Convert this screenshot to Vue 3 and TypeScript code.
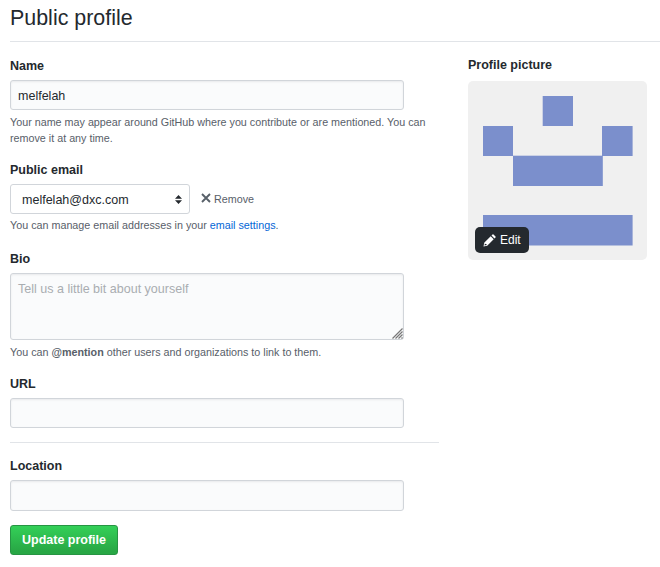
<script setup lang="ts">
import { ref } from 'vue'

interface Cell { x: number; y: number; w: number; h: number }

const name = ref('melfelah')
const email = ref('melfelah@dxc.com')
const bio = ref('')
const url = ref('')
const location = ref('')

const cells: Cell[] = [
  { x: 74.7, y: 15, w: 30.3, h: 30 },
  { x: 15, y: 45, w: 30, h: 30 },
  { x: 134, y: 45, w: 30.6, h: 30 },
  { x: 45, y: 74.7, w: 89.8, h: 30.3 },
  { x: 15, y: 134, w: 149.6, h: 30.5 },
]
</script>

<template>
  <main class="page">
    <h1 class="title">Public profile</h1>
    <div class="columns">
      <form class="form" @submit.prevent>
        <section class="field name-field">
          <label class="label" for="name">Name</label>
          <input id="name" v-model="name" class="control" type="text" />
          <p class="note">Your name may appear around GitHub where you contribute or are mentioned. You can<br />remove it at any time.</p>
        </section>

        <section class="field email-field">
          <label class="label" for="email">Public email</label>
          <div class="email-row">
            <button id="email" class="select" type="button">
              <span>{{ email }}</span>
              <svg class="arrows" viewBox="0 0 7 9"><path d="M3.5 0 7 3.800H0zM0 5.200h7L3.500 9z" /></svg>
            </button>
            <button class="remove" type="button">
              <svg class="cross" viewBox="0 0 10 10"><path d="M1 1l8 8M9 1L1 9" /></svg>
              <span>Remove</span>
            </button>
          </div>
          <p class="note">You can manage email addresses in your <a class="link" href="#">email settings</a>.</p>
        </section>

        <section class="field bio-field">
          <label class="label" for="bio">Bio</label>
          <div class="bio-box">
            <textarea id="bio" v-model="bio" class="control bio" placeholder="Tell us a little bit about yourself"></textarea>
            <svg class="grip" viewBox="0 0 11 11"><path d="M0.500 10.500l10-10M3.500 10.500l7-7M6.500 10.500l4-4M9.500 10.500l1-1" /></svg>
          </div>
          <p class="note">You can <strong>@mention</strong> other users and organizations to link to them.</p>
        </section>

        <section class="field url-field">
          <label class="label" for="url">URL</label>
          <input id="url" v-model="url" class="control" type="text" />
        </section>

        <section class="field location-field">
          <label class="label" for="location">Location</label>
          <input id="location" v-model="location" class="control tall" type="text" />
        </section>

        <button class="submit" type="submit">Update profile</button>
      </form>

      <aside class="picture">
        <h2 class="label">Profile picture</h2>
        <div class="avatar">
          <svg class="identicon" viewBox="0 0 179 179">
            <rect v-for="(c, i) in cells" :key="i" :x="c.x" :y="c.y" :width="c.w" :height="c.h" />
          </svg>
          <button class="edit" type="button">
            <svg class="pencil" viewBox="0 0 13 13"><path fill-rule="evenodd" d="M.5 12.500l.7-3.700L7.700 2.300l3 3-6.500 6.500zM1.900 9.500l-.4 2 2-.4V10H2.500zM8.500 1.500l1-1q.5-.5 1 0l2 2q.5.500 0 1l-1 1z" /></svg>
            <span>Edit</span>
          </button>
        </div>
      </aside>
    </div>
  </main>
</template>

<style>
body { background: #fff; }
</style>

<style scoped>
* { box-sizing: border-box; }
.page {
  height: 567px;
  padding-left: 10px;
  overflow: hidden;
  color: #24292e;
  font: 12.53px/19px "Liberation Sans", Arial, sans-serif;
}
button, input, textarea { font-family: inherit; }
.title {
  height: 42px;
  margin: 0;
  padding-top: 2px;
  border-bottom: 1px solid #e1e4e8;
  font-size: 21.43px;
  font-weight: 400;
  line-height: 33px;
}
.columns { display: flex; gap: 29px; }
.form { width: 429px; padding-top: 14px; }
.field { display: flex; flex-direction: column; align-items: flex-start; }
.name-field { height: 104px; }
.email-field { height: 89px; }
.bio-field { height: 125px; }
.url-field { height: 69px; border-bottom: 1px solid #e1e4e8; }
.location-field { height: 82px; padding-top: 13px; }
.label {
  display: block;
  height: 19px;
  margin: 0 0 5px;
  font-size: 12.5px;
  font-weight: 700;
  line-height: 21px;
}
.control {
  display: block;
  flex: none;
  width: 394px;
  height: 30px;
  margin: 0;
  padding: 1px 7px 0;
  color: #24292e;
  background: #fafbfc;
  border: 1px solid #d1d5da;
  border-radius: 3px;
  box-shadow: inset 0 1px 2px rgba(27, 31, 35, .075);
  font-size: 12.53px;
  line-height: 19px;
  outline: none;
}
.tall { height: 31px; }
.bio-box { position: relative; }
.bio { height: 67px; padding-top: 6px; resize: none; }
.bio::placeholder { color: #a9adb1; }
.grip {
  position: absolute;
  right: 1px;
  bottom: 1px;
  width: 11px;
  height: 11px;
  fill: none;
  stroke: #777;
  stroke-width: 1.2;
}
.note {
  margin: 4px 0 0;
  color: #586069;
  font-size: 10.75px;
  line-height: 16px;
  white-space: nowrap;
}
.email-field .note { margin-top: 3px; }
.link { color: #0366d6; text-decoration: none; }
.email-row { display: flex; align-items: center; gap: 11px; }
.select {
  display: flex;
  align-items: center;
  justify-content: space-between;
  width: 180px;
  height: 30px;
  padding: 0 7px 0 11px;
  color: #24292e;
  background: #fff;
  border: 1px solid #d1d5da;
  border-radius: 3px;
  font-size: 12.53px;
  line-height: 19px;
}
.select span { padding-top: 2px; }
.arrows { width: 7px; height: 9px; fill: #24292e; }
.remove {
  display: flex;
  align-items: center;
  gap: 3px;
  padding: 0;
  color: #586069;
  background: none;
  border: 0;
  font-size: 10.75px;
  line-height: 16px;
}
.cross { width: 10px; height: 10px; margin-top: -2px; fill: none; stroke: #586069; stroke-width: 1.9; }
.submit {
  display: block;
  width: 108px;
  height: 30px;
  padding: 1px 0 0;
  color: #fff;
  background: linear-gradient(180deg, #34d058, #28a745 90%);
  border: 1px solid #279443;
  border-radius: 3px;
  font-size: 12.5px;
  font-weight: 700;
  line-height: 19px;
}
.picture { width: 179px; padding-top: 13px; }
.picture .label { margin-bottom: 7px; }
.avatar {
  position: relative;
  height: 179px;
  overflow: hidden;
  background: #f0f0f0;
  border-radius: 5px;
}
.identicon { display: block; width: 179px; height: 179px; fill: #7b8fcc; }
.edit {
  position: absolute;
  left: 7px;
  bottom: 7px;
  display: flex;
  align-items: center;
  gap: 4px;
  width: 54px;
  height: 26px;
  padding: 0 0 0 8px;
  color: #fff;
  background: #24292e;
  border: 0;
  border-radius: 5px;
  font-size: 12px;
  line-height: 18px;
}
.pencil { width: 13px; height: 13px; fill: #fff; }
</style>
